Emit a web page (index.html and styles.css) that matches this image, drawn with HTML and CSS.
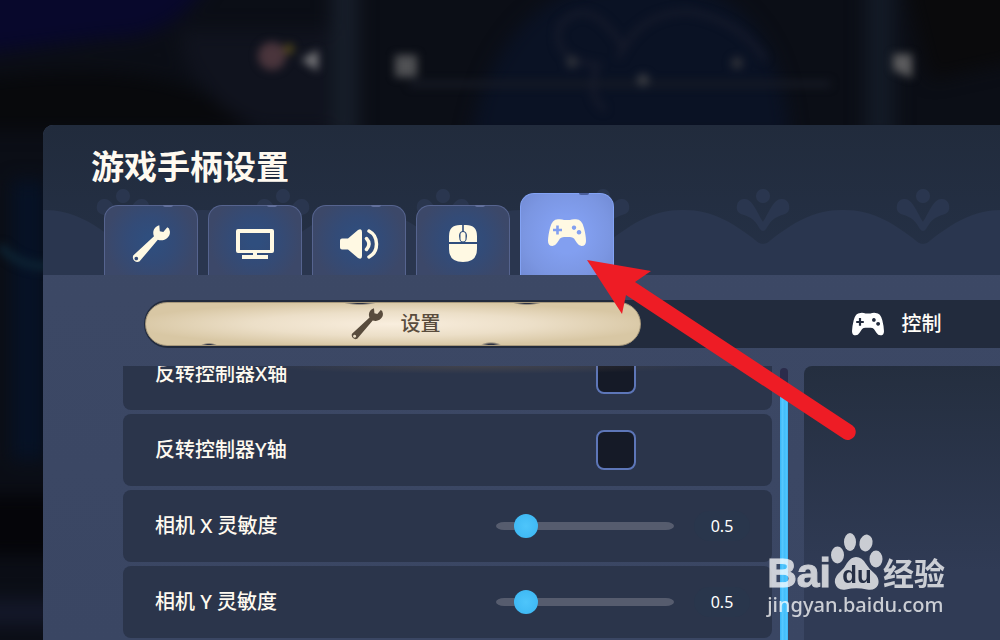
FILE: index.html
```html
<!DOCTYPE html>
<html lang="zh-CN">
<head>
  <meta charset="UTF-8">
  <title>游戏手柄设置</title>
  <meta name="viewport" content="width=device-width, initial-scale=1.0">
  <link rel="stylesheet" href="styles.css">
</head>
<body>
  <!-- shared icons -->
  <svg class="sprite" aria-hidden="true">
    <symbol id="wrench" viewBox="0 0 38 38">
      <path fill-rule="evenodd" d="M27.3.3C22 2 20 7 22 11.3L1.2 30.6A4.7 4.7 0 0 0 7.4 36.6L25.8 14.8C32 17 38.5 12.5 37.9 6.5L37 3.5 35.3 2.3 31.3 7 27.8 6.2ZM4.3 31.7a1.8 1.8 0 1 0 .01 0Z"/>
    </symbol>
    <symbol id="gamepad" viewBox="0 0 38 27">
      <path fill-rule="evenodd" d="M10 .3Q14 0 16 1H22Q24 0 28 .3Q34 .3 36 9Q38 17 38 22Q38 27 33.5 27Q31 27 29 24L26 19.5Q24.500 18 22 18H16Q13.500 18 12 19.5L9 24Q7 27 4.500 27Q0 27 0 22Q0 17 2 9Q4 .3 10 .3ZM8.200 6.500V9.800H5V12.200H8.200V15.500H10.800V12.200H14V9.800H10.800V6.500ZM26 6.500a2.200 2.200 0 1 0 .01 0ZM31 11a2.300 2.300 0 1 0 .01 0Z"/>
    </symbol>
  </svg>

  <!-- blurred game scene -->
  <svg class="scene" viewBox="0 0 1000 640" preserveAspectRatio="xMinYMin slice" aria-hidden="true">
    <defs>
      <filter id="soft" x="-50%" y="-50%" width="200%" height="200%" color-interpolation-filters="sRGB"><feGaussianBlur stdDeviation="9"/></filter>
      <filter id="near" x="-80%" y="-80%" width="260%" height="260%" color-interpolation-filters="sRGB"><feGaussianBlur stdDeviation="4"/></filter>
    </defs>
    <rect width="1000" height="640" fill="#0b0e16"/>
    <g filter="url(#soft)">
      <path d="M-30-30H215Q180 40 110 38L-30 55Z" fill="#08082c"/>
      <path d="M-30 80Q190 50 250 130H-30Z" fill="#08090c"/>
      <path d="M180 30H330V130H260Q180 90 180 30Z" fill="#10131e"/>
      <path d="M332-20H358V140H332Z" fill="#171e2a"/>
      <path d="M470 140Q500-20 640-20T790 140Z" fill="#0a1224"/>
      <path d="M865-20H895V140H865Z" fill="#131a26"/>
      <path d="M905-20H1020V60L930 80Z" fill="#0a0a0c"/>
      <path d="M12 180H45V460H12Z" fill="#061226"/>
      <path d="M-20 495H60V555H-20Z" fill="#050509"/>
      <path d="M-20 600H60V625H-20Z" fill="#14182a"/>
    </g>
    <g filter="url(#near)" fill="none">
      <path d="M0 246Q20 268 50 266" stroke="#0d2333" stroke-width="8"/>
      <path d="M410 84H830" stroke="#171b25" stroke-width="6"/>
      <path d="M625 50Q590-8 560 25Q550 60 598 65Q585 95 605 110M618 58Q640 10 690 12Q740 20 765 60" stroke="#171b2b" stroke-width="5"/>
      <circle cx="272" cy="56" r="14" fill="#4a353c"/>
      <circle cx="289" cy="49" r="5" fill="#554a1a"/>
      <path d="M301 60L318 50V71Z" fill="#77777a"/>
      <path d="M395 77V55H417V77Z" fill="#505154"/>
      <path d="M893 70V54H912V78Z" fill="#5c5c5e"/>
      <circle cx="572" cy="62" r="6" fill="#2e3139"/>
      <circle cx="643" cy="80" r="6" fill="#3b3d43"/>
      <circle cx="737" cy="63" r="6" fill="#2f3138"/>
    </g>
  </svg>

  <main class="panel">
    <header class="panel-header">
      <svg class="ornament" aria-hidden="true">
        <pattern id="scallop" width="160" height="150" patternUnits="userSpaceOnUse">
          <path d="M0 85C30 85 50 98 72 115Q80 123 88 115C110 98 130 85 160 85V150H0Z"/>
          <circle cx="80" cy="71" r="7"/>
          <path d="M80 97C74 88 70 74 61 74A8 8 0 0 0 58 89C70 92 73 97 77 104Q80 108 83 104C87 97 90 92 102 89A8 8 0 0 0 99 74C90 74 86 88 80 97Z"/>
        </pattern>
        <rect width="100%" height="150" fill="url(#scallop)"/>
      </svg>
      <h1>游戏手柄设置</h1>
      <nav class="tabs">
        <button class="tab" aria-label="通用"><svg width="38" height="38"><use href="#wrench"/></svg></button>
        <button class="tab" aria-label="显示">
          <svg width="38" height="30" viewBox="0 0 38 30">
            <path fill-rule="evenodd" d="M2 0H36Q38 0 38 2V22Q38 24 36 24H21V26H32V30H6V26H17V24H2Q0 24 0 22V2Q0 0 2 0ZM4 4V21H34V4Z"/>
          </svg>
        </button>
        <button class="tab" aria-label="声音">
          <svg width="39" height="30" viewBox="0 0 39 30">
            <path d="M2 9.500H8L18 1Q22-1 22 3V27Q22 31 18 29L8 20.500H2Q0 20.500 0 18.500V11.500Q0 9.500 2 9.500Z"/>
            <path class="wave" d="M26.500 9.500Q31.500 15 26.500 20.500M29 2Q36.500 6 36.500 15T29 28"/>
          </svg>
        </button>
        <button class="tab" aria-label="鼠标">
          <svg width="28" height="37" viewBox="0 0 28 37">
            <path d="M13.200 0V6Q10 7 10 11T12 17H0V11Q0 0 11 0ZM14.800 0V6Q18 7 18 11T16 17H28V11Q28 0 17 0ZM0 19H28V24Q28 37 14 37T0 24Z"/>
            <rect x="11.500" y="7" width="5" height="9.500" rx="2.500"/>
          </svg>
        </button>
        <button class="tab active" aria-label="游戏手柄"><svg width="38" height="27"><use href="#gamepad"/></svg></button>
      </nav>
    </header>

    <nav class="subtabs">
      <button class="subtab selected"><svg width="32" height="32"><use href="#wrench"/></svg>设置</button>
      <button class="subtab"><svg width="32" height="24"><use href="#gamepad"/></svg>控制</button>
    </nav>

    <div class="content">
      <div class="list">
        <div class="row">
          <label for="invertX">反转控制器X轴</label>
          <div class="control"><input type="checkbox" id="invertX"></div>
        </div>
        <div class="row">
          <label for="invertY">反转控制器Y轴</label>
          <div class="control"><input type="checkbox" id="invertY"></div>
        </div>
        <div class="row">
          <label for="cameraX">相机 X 灵敏度</label>
          <div class="control">
            <input type="range" id="cameraX" min="0.1" max="3.5" step="0.1" value="0.5">
            <output for="cameraX">0.5</output>
          </div>
        </div>
        <div class="row">
          <label for="cameraY">相机 Y 灵敏度</label>
          <div class="control">
            <input type="range" id="cameraY" min="0.1" max="3.5" step="0.1" value="0.5">
            <output for="cameraY">0.5</output>
          </div>
        </div>
      </div>
      <div class="scrollbar"><div class="scroll-thumb"></div></div>
      <aside class="preview"></aside>
    </div>
  </main>

  <svg class="arrow" width="270" height="181" viewBox="0 0 270 181" aria-hidden="true">
    <path d="M0 0L64 11 48 22 265.500 165.500A8 8 0 0 1 257 179L39 35 35 54Z"/>
  </svg>

  <div class="watermark">
    <div class="brand">
      <span class="bai">Bai</span>
      <span class="paw">
        <svg width="52" height="57" viewBox="0 0 52 57" aria-hidden="true">
          <ellipse cx="6.500" cy="22" rx="6.500" ry="8.500"/>
          <ellipse cx="19" cy="9" rx="6" ry="9"/>
          <ellipse cx="35" cy="10" rx="6.500" ry="8.500" transform="rotate(12 35 10)"/>
          <ellipse cx="45" cy="26" rx="6.500" ry="8.500"/>
          <path d="M25 24Q31 24 35 31Q38 36 44 41Q49 46 47 52Q44 58 36 56.500Q25 54 15 56.500Q6 58 4 50Q3 44 9 39Q13 36 16 30Q20 24 25 24Z"/>
        </svg>
        <span class="du">du</span>
      </span>
      <span class="jingyan">经验</span>
    </div>
    <div class="site">jingyan.baidu.com</div>
  </div>
</body>
</html>
```
FILE: styles.css
```css
* {
  box-sizing: border-box;
}
body {
  margin: 0;
  height: 100vh;
  overflow: hidden;
  position: relative;
  display: flex;
  background: #0b0e16;
  color: #fffaf0;
  font-family: "Noto Sans", "Noto Sans CJK SC", sans-serif;
}
button {
  border: none;
  padding: 0;
  font: inherit;
  cursor: pointer;
}
.sprite {
  position: absolute;
  width: 0;
  height: 0;
}
.scene {
  position: absolute;
  inset: 0;
  width: 100%;
  height: 100%;
}

/* panel */
.panel {
  position: relative;
  flex: 1;
  min-width: 0;
  margin: 125px 0 0 43px;
  display: flex;
  flex-direction: column;
  overflow: hidden;
  border-radius: 10px 0 0 0;
  background: linear-gradient(#3d4966, #3a4663);
}
.panel-header {
  position: relative;
  height: 150px;
  flex: none;
  display: flex;
  flex-direction: column;
  justify-content: space-between;
  padding: 18px 0 0 48px;
  background: linear-gradient(#212b3c, #253147);
}
.ornament {
  position: absolute;
  inset: 0;
  width: 100%;
  height: 100%;
  fill: #2a364f;
}
h1 {
  position: relative;
  margin: 0;
  font-size: 33px;
  line-height: 48px;
  font-weight: 700;
}

/* category tabs */
.tabs {
  position: relative;
  display: flex;
  align-items: flex-end;
  gap: 10px;
  padding-left: 13px;
}
.tab {
  position: relative;
  width: 94px;
  height: 70px;
  display: flex;
  align-items: center;
  justify-content: center;
  padding-top: 6px;
  border: 1px solid #56648f;
  border-bottom: none;
  border-radius: 14px 14px 0 0;
  background: radial-gradient(circle, #2f4e7e 10%, #334b77 40%, #3c4869 80%);
}
/* chipped edge */
.tab::after {
  content: "";
  position: absolute;
  top: -1px;
  right: 24px;
  width: 10px;
  height: 2px;
  border-radius: 0 0 5px 5px;
  background: #62709c;
}
.tab svg {
  fill: #fff9e3;
}
.wave {
  fill: none;
  stroke: #fff9e3;
  stroke-width: 3.5;
  stroke-linecap: round;
}
.tab.active {
  height: 82px;
  padding: 0 0 5px;
  border-color: #83a3f5;
  background: radial-gradient(circle, #829ff0 30%, #7b96e2 70%, #728bd4);
}
.tab.active::after {
  background: #4a5f9c;
}

/* sub tabs */
.subtabs {
  flex: none;
  display: flex;
  height: 48px;
  margin: 25px 0 0 101px;
  padding: 2px 0 2px 1px;
  overflow: hidden;
  border-radius: 24px 0 0 24px;
  background: #222b3d;
}
.subtab {
  flex: 0 0 500px;
  display: flex;
  align-items: center;
  justify-content: center;
  gap: 18px;
  padding-left: 3px;
  background: none;
  color: #fffdf8;
  font-size: 20px;
  line-height: 28px;
  font-weight: 500;
}
.subtab svg {
  fill: #ffffff;
}
.subtab.selected {
  flex-basis: 496px;
  margin-right: 4px;
  padding-left: 5px;
  border: 1px solid #a8997c;
  border-radius: 22px;
  color: #594c3d;
  background:
    radial-gradient(16px 2px at 214px 0, #2b3040 30%, transparent),
    radial-gradient(14px 2px at 381px 0, #2b3040 30%, transparent),
    radial-gradient(8px 2px at 63px 100%, #2b3040 30%, transparent),
    radial-gradient(10px 3px at 345px 100%, #2b3040 30%, transparent),
    radial-gradient(ellipse at center, #f9eede, #ecdfc8 40%, #d8c7a4 75%);
}
.subtab.selected svg {
  fill: #594c3d;
}

/* settings */
.content {
  flex: 1;
  min-height: 0;
  display: grid;
  grid-template-columns: minmax(0, 1fr) 8px 212px;
  margin: 18px 0 0 80px;
}
.list {
  position: relative;
  display: flex;
  flex-direction: column;
  gap: 4px;
  overflow: hidden;
  margin-right: 8px;
}
.list::before {
  content: "";
  position: absolute;
  z-index: 1;
  top: 0;
  left: 20%;
  right: 10%;
  height: 8px;
  background: radial-gradient(ellipse at top, rgba(120, 100, 80, 0.3), transparent 70%);
}
.row {
  flex: none;
  height: 72px;
  display: flex;
  align-items: center;
  justify-content: space-between;
  padding: 0 22px 0 32px;
  border-radius: 8px;
  background: #2b354b;
}
/* the list is scrolled a little */
.row:first-child {
  margin-top: -28px;
}
.row label {
  font-size: 20px;
  line-height: 28px;
  font-weight: 500;
}
.control {
  width: 254px;
  display: flex;
  align-items: center;
  justify-content: space-between;
}
input[type="checkbox"] {
  appearance: none;
  width: 40px;
  height: 40px;
  margin: 0 0 0 100px;
  border: 2px solid #5d76b8;
  border-radius: 8px;
  background: #151a27;
}
input[type="range"] {
  appearance: none;
  width: 178px;
  height: 24px;
  margin: 0;
  background: none;
}
input[type="range"]::-webkit-slider-runnable-track {
  height: 8px;
  border-radius: 8px / 4px;
  background: #565c6e;
}
input[type="range"]::-webkit-slider-thumb {
  appearance: none;
  width: 24px;
  height: 24px;
  margin-top: -8px;
  border-radius: 50%;
  background: radial-gradient(circle, #4ec5fb, #3ab5f2);
}
output {
  width: 56px;
  border-radius: 15px;
  background: #29364c;
  color: #ffffff;
  font-size: 16px;
  line-height: 30px;
  text-align: center;
}
.scrollbar {
  margin-top: 2px;
  padding-top: 18px;
  border-radius: 4px 4px 0 0;
  background: #2b2c4b;
}
.scroll-thumb {
  height: 100%;
  background: linear-gradient(90deg, #38b4f3, #55c8ff 30%, #42bdf9 60%, #50c6ff 80%, #38b4f3);
}
.preview {
  margin-left: 16px;
  border-radius: 8px 0 0 0;
  background: linear-gradient(#242e3f, #303b55 75%);
}

/* pointer arrow */
.arrow {
  position: absolute;
  left: 587px;
  top: 260px;
  fill: #ee1c25;
}

/* watermark */
.watermark {
  position: absolute;
  right: 55px;
  bottom: 20px;
  color: #ffffff;
  opacity: 0.75;
}
.brand {
  display: flex;
  align-items: flex-end;
  height: 57px;
}
.bai {
  font-family: "Liberation Sans", sans-serif;
  font-size: 41px;
  font-weight: 700;
  line-height: 34px;
  -webkit-text-stroke: 1px #ffffff;
}
.paw {
  position: relative;
  display: flex;
}
.paw svg {
  fill: #ffffff;
}
.du {
  position: absolute;
  left: 0;
  right: 0;
  bottom: 1px;
  text-align: center;
  font-family: "Liberation Sans", sans-serif;
  font-size: 24px;
  font-weight: 700;
  line-height: 28px;
  color: #222b40;
}
.jingyan {
  font-family: "Noto Sans CJK SC", sans-serif;
  font-size: 31px;
  font-weight: 700;
  line-height: 36px;
}
.site {
  font-size: 20px;
  line-height: 30px;
  font-weight: 500;
}
```
